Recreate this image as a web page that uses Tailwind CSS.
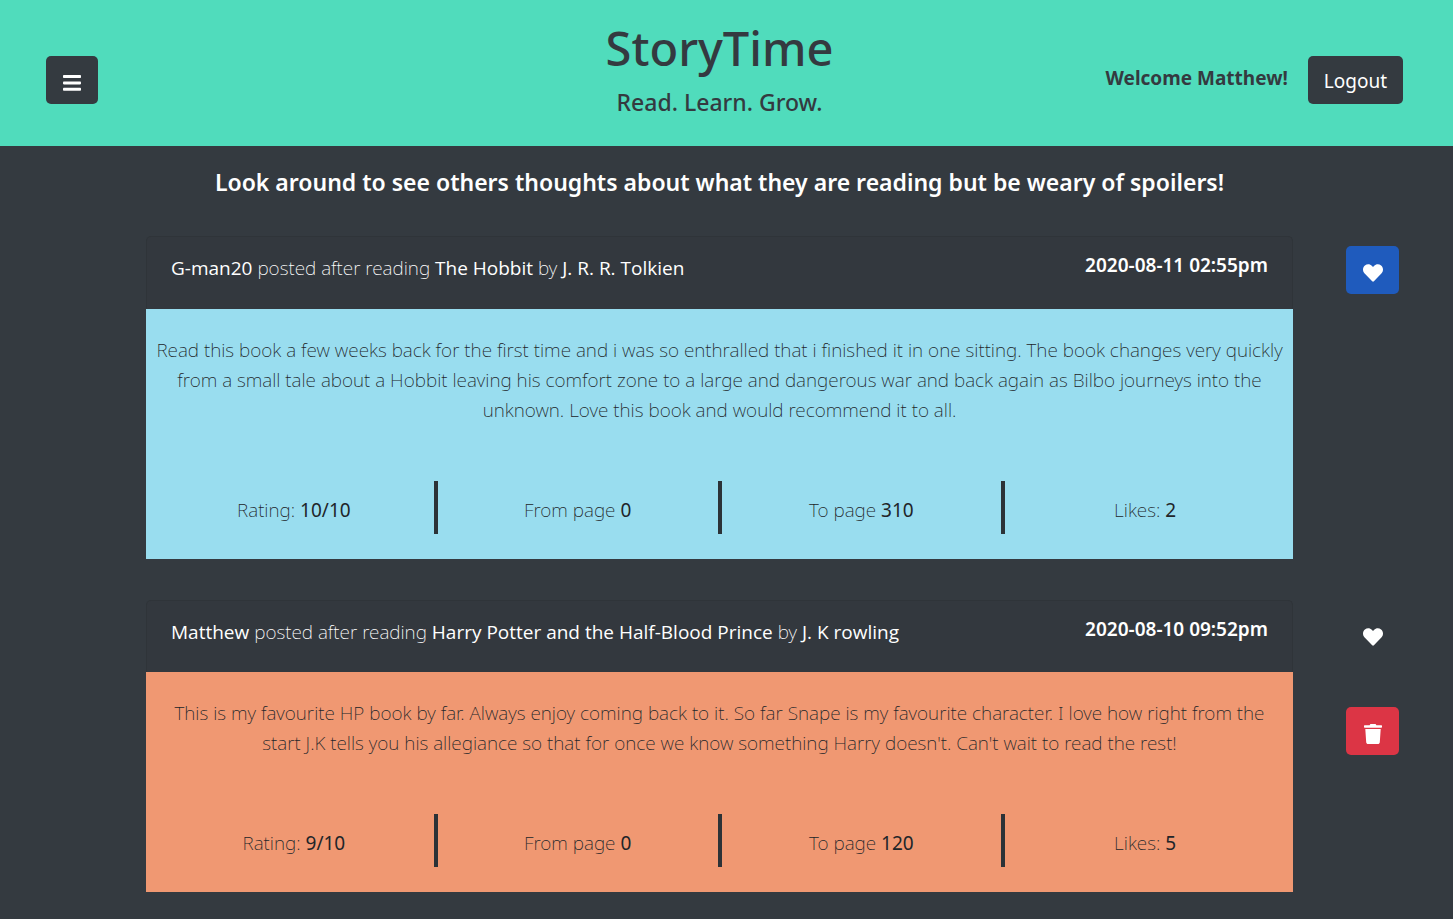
<!DOCTYPE html>
<html lang="en">
<head>
<meta charset="utf-8">
<meta name="viewport" content="width=device-width, initial-scale=1">
<title>StoryTime</title>
<script src="https://cdn.jsdelivr.net/npm/@tailwindcss/browser@4"></script>
</head>
<body class="min-h-screen bg-[#343a40] font-['Noto_Sans','Open_Sans',sans-serif] text-[19px] leading-[30px] text-[#212529]">

<header class="grid grid-cols-[1fr_auto_1fr] items-start bg-[#50dcbc] pt-[18px] pr-[50px] pb-[29px] pl-[46px] text-[#343a40]">
  <button type="button" aria-label="Open menu" class="mt-[38px] flex h-12 w-[52px] items-center justify-center rounded-[5px] bg-[#343a40] pt-1.5 text-white">
    <svg class="h-4 w-[18px]" viewBox="0 0 18 16" fill="currentColor" aria-hidden="true">
      <rect x="0" y="0" width="18" height="3" rx="0.8"/>
      <rect x="0" y="6.4" width="18" height="3" rx="0.8"/>
      <rect x="0" y="12.8" width="18" height="3" rx="0.8"/>
    </svg>
  </button>
  <div class="mr-2.5 text-center font-medium">
    <h1 class="text-[47px] leading-[60px]">StoryTime</h1>
    <h2 class="mt-[9px] text-[23px] leading-[30px]">Read. Learn. Grow.</h2>
  </div>
  <div class="mt-[38px] flex items-start justify-end gap-5">
    <p class="mt-[7px] font-bold">Welcome Matthew!</p>
    <button type="button" class="h-12 rounded-[5px] bg-[#343a40] px-4 pb-0.5 pt-1 text-white">Logout</button>
  </div>
</header>

<main class="pr-3.5">
  <h3 class="pt-[21px] text-center text-[23px] leading-[30px] font-semibold text-white">Look around to see others thoughts about what they are reading but be weary of spoilers!</h3>

  <section class="mt-[39px] grid grid-cols-[146px_minmax(0,1fr)_146px] gap-y-[41px]">
    <article class="col-start-2">
      <header class="flex h-[73px] items-start justify-between rounded-t-[5px] border border-b-0 border-[#2f3439] bg-[#33383e] px-6 text-white">
        <p class="mt-4 font-extralight"><strong class="font-['Open_Sans',sans-serif] font-medium">G-man20</strong> posted after reading <strong class="font-['Open_Sans',sans-serif] font-medium">The Hobbit</strong> by <strong class="font-['Open_Sans',sans-serif] font-medium">J. R. R. Tolkien</strong></p>
        <time datetime="2020-08-11T14:55" class="mt-[13px] font-semibold">2020-08-11 02:55pm</time>
      </header>
      <div class="bg-[#99ddef] pt-[26px] pb-[25px]">
        <p class="px-2 text-center font-extralight">Read this book a few weeks back for the first time and i was so enthralled that i finished it in one sitting. The book changes very quickly from a small tale about a Hobbit leaving his comfort zone to a large and dangerous war and back again as Bilbo journeys into the unknown. Love this book and would recommend it to all.</p>
        <ul class="mt-14 grid grid-cols-4 pr-1 pl-2 text-center font-extralight">
          <li class="border-r-4 border-[#2c3237] pt-3.5 pb-[9px]">Rating: <span class="font-normal">10/10</span></li>
          <li class="border-r-4 border-[#2c3237] pt-3.5 pb-[9px]">From page <span class="font-normal">0</span></li>
          <li class="border-r-4 border-[#2c3237] pt-3.5 pb-[9px]">To page <span class="font-normal">310</span></li>
          <li class="pt-3.5 pr-1 pb-[9px]">Likes: <span class="font-normal">2</span></li>
        </ul>
      </div>
    </article>
    <div class="pt-2.5 pl-[53px]">
      <button type="button" aria-label="Unlike post" class="flex h-12 w-[53px] items-center justify-center rounded-[5px] bg-[#1f5bbd] pt-[5px] text-white">
        <svg class="h-[18px] w-5" viewBox="0 0 20 18" fill="currentColor" aria-hidden="true"><path d="M18.1 1.6C16.1-.2 13-.1 11 1.9l-1 1-1-1C7-.1 3.900-.2 1.900 1.600-.5 3.700-.6 7.200 1.400 9.300l7.800 8c.5.5 1.200.5 1.700 0l7.700-8c2-2.100 1.900-5.600-.5-7.700z"/></svg>
      </button>
    </div>

    <article class="col-start-2">
      <header class="flex h-[72px] items-start justify-between rounded-t-[5px] border border-b-0 border-[#2f3439] bg-[#33383e] px-6 text-white">
        <p class="mt-4 font-extralight"><strong class="font-['Open_Sans',sans-serif] font-medium">Matthew</strong> posted after reading <strong class="font-['Open_Sans',sans-serif] font-medium">Harry Potter and the Half-Blood Prince</strong> by <strong class="font-['Open_Sans',sans-serif] font-medium">J. K rowling</strong></p>
        <time datetime="2020-08-10T21:52" class="mt-[13px] font-semibold">2020-08-10 09:52pm</time>
      </header>
      <div class="bg-[#f09872] pt-[26px] pb-[25px]">
        <p class="px-2 text-center font-extralight">This is my favourite HP book by far. Always enjoy coming back to it. So far Snape is my favourite character. I love how right from the start J.K tells you his allegiance so that for once we know something Harry doesn't. Can't wait to read the rest!</p>
        <ul class="mt-14 grid grid-cols-4 pr-1 pl-2 text-center font-extralight">
          <li class="border-r-4 border-[#2c3237] pt-3.5 pb-[9px]">Rating: <span class="font-normal">9/10</span></li>
          <li class="border-r-4 border-[#2c3237] pt-3.5 pb-[9px]">From page <span class="font-normal">0</span></li>
          <li class="border-r-4 border-[#2c3237] pt-3.5 pb-[9px]">To page <span class="font-normal">120</span></li>
          <li class="pt-3.5 pr-1 pb-[9px]">Likes: <span class="font-normal">5</span></li>
        </ul>
      </div>
    </article>
    <div class="flex flex-col gap-[49px] pt-2.5 pl-[53px]">
      <button type="button" aria-label="Like post" class="flex h-12 w-[53px] items-center justify-center rounded-[5px] pt-[5px] text-white">
        <svg class="h-[18px] w-5" viewBox="0 0 20 18" fill="currentColor" aria-hidden="true"><path d="M18.1 1.6C16.1-.2 13-.1 11 1.9l-1 1-1-1C7-.1 3.900-.2 1.900 1.600-.5 3.700-.6 7.200 1.400 9.300l7.800 8c.5.5 1.200.5 1.700 0l7.700-8c2-2.100 1.900-5.600-.5-7.700z"/></svg>
      </button>
      <button type="button" aria-label="Delete post" class="flex h-12 w-[53px] items-center justify-center rounded-[5px] bg-[#dc3545] pt-1.5 text-white">
        <svg class="h-5 w-[18px]" viewBox="0 0 18 20" fill="currentColor" aria-hidden="true"><path d="M.6 1.200h5l.5-.8c.2-.3.400-.4.700-.4h4.400c.3 0 .5.100.7.400l.5.8h5c.3 0 .6.3.6.6v1.300c0 .400-.3.600-.6.600H.6c-.3 0-.6-.2-.6-.6V1.800c0-.3.300-.6.600-.6zM1.300 5h15.400l-.9 13.200c-.1 1-.9 1.800-1.900 1.800H4.100c-1 0-1.800-.8-1.900-1.800z"/></svg>
      </button>
    </div>
  </section>
</main>
</body>
</html>
